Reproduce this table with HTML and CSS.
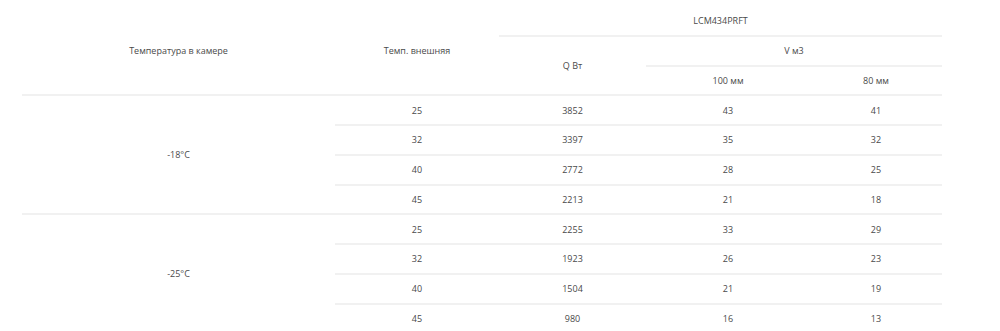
FILE: index.html
```html
<!DOCTYPE html>
<html lang="ru">
<head>
<meta charset="utf-8">
<link rel="stylesheet" href="styles.css">
</head>
<body>
<table class="spec">
  <colgroup>
    <col class="c1"><col class="c2"><col class="c3"><col class="c4"><col class="c5">
  </colgroup>
  <thead>
    <tr><th rowspan="3">Температура в камере</th><th rowspan="3">Темп. внешняя</th><th colspan="3">LCM434PRFT</th></tr>
    <tr><th rowspan="2">Q Вт</th><th colspan="2">V м3</th></tr>
    <tr><th>100 мм</th><th>80 мм</th></tr>
  </thead>
  <tbody>
    <tr><td rowspan="4">-18°C</td><td>25</td><td>3852</td><td>43</td><td>41</td></tr>
    <tr><td>32</td><td>3397</td><td>35</td><td>32</td></tr>
    <tr><td>40</td><td>2772</td><td>28</td><td>25</td></tr>
    <tr><td>45</td><td>2213</td><td>21</td><td>18</td></tr>
    <tr><td rowspan="4">-25°C</td><td>25</td><td>2255</td><td>33</td><td>29</td></tr>
    <tr><td>32</td><td>1923</td><td>26</td><td>23</td></tr>
    <tr><td>40</td><td>1504</td><td>21</td><td>19</td></tr>
    <tr><td>45</td><td>980</td><td>16</td><td>13</td></tr>
  </tbody>
</table>
</body>
</html>
```
FILE: styles.css
```css
html, body { margin: 0; padding: 0; background: #fff; }
body { font-family: "Open Sans", "Noto Sans", sans-serif; color: #4a4a4a; }
.spec {
  margin: 7px 0 0 22px;
  width: 920px;
  table-layout: fixed;
  border-collapse: collapse;
  font-size: 9px;
}
.c1 { width: 313px; }
.c2 { width: 164px; }
.c3 { width: 147px; }
.c4 { width: 164px; }
.c5 { width: 132px; }
.spec th, .spec td {
  font-weight: 400;
  text-align: center;
  vertical-align: middle;
  padding: 0;
  height: 27.75px;
  border-bottom: 2px solid #f1f1f1;
}
```
